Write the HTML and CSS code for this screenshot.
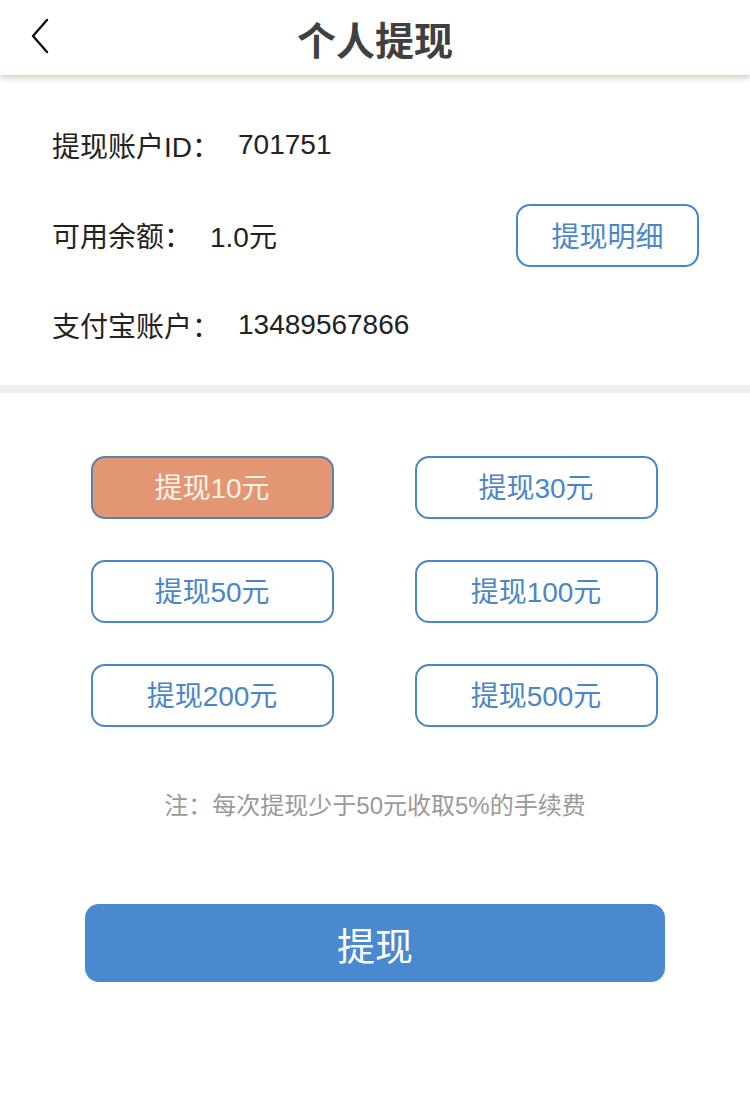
FILE: index.html
```html
<!DOCTYPE html>
<html lang="zh-CN">
<head>
  <meta charset="utf-8">
  <title>个人提现</title>
  <link rel="stylesheet" href="styles.css">
</head>
<body>
  <div id="page">
    <header class="topbar">
      <span class="back">
        <svg width="20" height="36" viewBox="0 0 20 36">
          <path d="M17 2 L3 18 L17 34" fill="none" stroke="#111" stroke-width="2.4" stroke-linecap="round" stroke-linejoin="round"/>
        </svg>
      </span>
      <h1>个人提现</h1>
    </header>

    <section class="info">
      <div class="row">
        <span class="label">提现账户ID：</span><span class="value">701751</span>
      </div>
      <div class="row">
        <span class="label">可用余额：</span><span class="value">1.0元</span>
        <button class="detail">提现明细</button>
      </div>
      <div class="row">
        <span class="label">支付宝账户：</span><span class="value">13489567866</span>
      </div>
    </section>

    <section class="amounts">
      <div class="grid">
        <button class="amount active">提现10元</button>
        <button class="amount">提现30元</button>
        <button class="amount">提现50元</button>
        <button class="amount">提现100元</button>
        <button class="amount">提现200元</button>
        <button class="amount">提现500元</button>
      </div>
      <p class="note">注：每次提现少于50元收取5%的手续费</p>
      <button class="submit">提现</button>
    </section>
  </div>
</body>
</html>
```

FILE: styles.css
```css
body {
  margin: 0;
  font-family: "Liberation Sans", "Noto Sans CJK SC", sans-serif;
  background-color: #fff;
  color: #222;
}
#page {
  width: 750px;
}
.topbar {
  height: 75px;
  position: relative;
  display: flex;
  align-items: center;
  justify-content: center;
  box-shadow: 0 3px 6px rgba(170, 200, 160, 0.7);
}
.topbar h1 {
  margin: 0;
  font-size: 39px;
  font-weight: bold;
  color: #404040;
}
.back {
  position: absolute;
  left: 30px;
  top: 18px;
}
.info {
  padding: 25px 51px 15px 52px;
  border-bottom: 8px solid #efefef;
}
.row {
  height: 90px;
  display: flex;
  align-items: center;
  font-size: 28px;
  color: #222;
}
.value {
  margin-left: 18px;
}
.detail {
  margin-left: auto;
  width: 183px;
  height: 63px;
  padding-bottom: 2px;
  border: 2px solid #4a86c8;
  border-radius: 14px;
  background-color: #fff;
  color: #4a86c8;
  font-family: inherit;
  font-size: 28px;
}
.amounts {
  display: flex;
  flex-flow: column nowrap;
  align-items: center;
  padding-top: 63px;
}
.grid {
  display: grid;
  grid-template-columns: 243px 243px;
  column-gap: 81px;
  row-gap: 41px;
  margin-right: 2px;
}
.amount {
  height: 63px;
  padding-bottom: 4px;
  border: 2px solid #4a86c8;
  border-radius: 14px;
  background-color: #fff;
  color: #4a86c8;
  font-family: inherit;
  font-size: 28px;
}
.amount.active {
  background-color: #e39674;
  border-color: #5a80b0;
  color: #fdf3ea;
}
.note {
  margin: 64px 0 0;
  line-height: 30px;
  font-size: 24px;
  color: #999;
}
.submit {
  margin-top: 83px;
  width: 580px;
  height: 78px;
  border: none;
  border-radius: 14px;
  background-color: #4a89d0;
  color: #fff;
  font-family: inherit;
  font-size: 38px;
}
```
